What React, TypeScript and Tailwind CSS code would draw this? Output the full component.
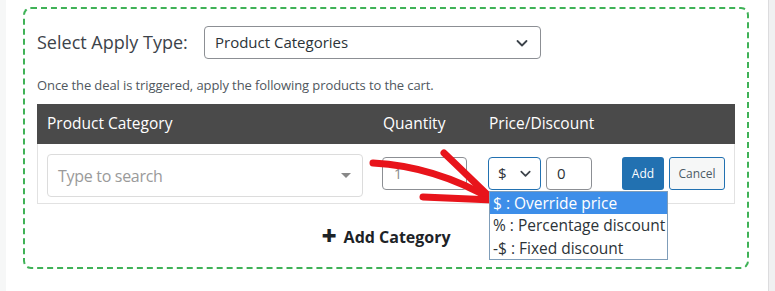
import React, { FC } from "react";

const Chevron: FC<{ className?: string }> = ({ className }) => (
    <svg viewBox="0 0 16 16" className={className} fill="none" stroke="currentColor" strokeWidth={1.8} strokeLinecap="round" strokeLinejoin="round">
        <path d="M3.5 6l4.5 4.5L12.5 6" />
    </svg>
);

const Arrow: FC = () => (
    <svg
        className="absolute left-0 top-0 pointer-events-none"
        width="775"
        height="291"
        viewBox="0 0 775 291"
        fill="none"
        stroke="#e8141b"
        strokeWidth={7}
        strokeLinecap="round"
        strokeLinejoin="round"
    >
        <path d="M373 163 C 412 165, 452 176, 493 200" />
        <path d="M444 153 C 462 170, 478 186, 493 200" />
        <path d="M423 197 C 446 198, 470 199, 493 200" />
    </svg>
);

const App: FC = () => {
    return (
        <div
            className="relative flex w-[775px] h-[291px] overflow-hidden bg-white"
            style={{ fontFamily: '"Open Sans", "Noto Sans", sans-serif' }}
        >
            <div className="w-[6px] bg-[#f6f7f7]" />
            <div className="flex-1 pl-[17px] pr-[19px] pt-[7px]">
                <div className="h-[262px] border-2 border-dashed border-[#3fb257] rounded-[8px] px-[12px] pt-[17px]">
                    <div className="flex items-center h-[33px]">
                        <span className="w-[167px] text-[18px] text-[#3c434a]">Select Apply Type:</span>
                        <div className="flex items-center justify-between w-[337px] h-[33px] border border-[#8c8f94] rounded-[4px] pl-[10px] pr-[10px] text-[15px] text-[#2c3338]">
                            <span>Product Categories</span>
                            <Chevron className="w-[16px] h-[16px] text-[#3c434a]" />
                        </div>
                    </div>
                    <p className="mt-[17px] text-[13px] tracking-[-0.1px] leading-[18px] text-[#50575e]">
                        Once the deal is triggered, apply the following products to the cart.
                    </p>
                    <div className="mt-[10px]">
                        <div className="grid grid-cols-[335px_106px_1fr] items-center h-[40px] px-[10px] bg-[#4a4a4a] text-white text-[15.5px]">
                            <span>Product Category</span>
                            <span className="ml-px">Quantity</span>
                            <span className="ml-px">Price/Discount</span>
                        </div>
                        <div className="relative grid grid-cols-[335px_106px_1fr] items-center h-[60px] px-[9px] border border-t-0 border-[#e2e2e2]">
                            <div className="flex items-center justify-between w-[316px] h-[43px] border border-[#dcdcdc] rounded-[4px] pl-[10px] pr-[11px] mt-[4px]">
                                <span className="text-[16px] tracking-[-0.3px] text-[#9a9a9a]">Type to search</span>
                                <span className="w-0 h-0 border-x-[5px] border-x-transparent border-t-[5px] border-t-[#888]" />
                            </div>
                            <div className="flex items-center w-[85px] h-[33px] border border-[#8c8f94] rounded-[4px] pl-[11px] text-[14px] text-[#8a8a8a]">
                                1
                            </div>
                            <div className="relative flex items-center">
                                <div className="flex items-center justify-between w-[53px] h-[33px] border border-[#2271b1] rounded-[4px] pl-[9px] pr-[7px] text-[15px] text-[#2c3338]">
                                    <span>$</span>
                                    <Chevron className="w-[15px] h-[15px] text-[#3c434a]" />
                                </div>
                                <div className="flex items-center ml-[5px] w-[46px] h-[33px] border border-[#8c8f94] rounded-[4px] pl-[10px] text-[15px] text-[#2c3338]">
                                    0
                                </div>
                                <button className="ml-[30px] w-[42px] h-[33px] rounded-[3px] bg-[#2271b1] text-white text-[12px]">
                                    Add
                                </button>
                                <button className="ml-[5px] w-[56px] h-[33px] rounded-[3px] border border-[#2271b1] bg-[#f6f7f7] text-[#4b5b66] text-[12px]">
                                    Cancel
                                </button>
                                <div className="absolute left-[1px] top-[34px] w-[179px] border border-[#7f9db9] bg-white text-[15.5px] text-[#2c3338] z-10 whitespace-nowrap">
                                    <div className="h-[22px] leading-[22px] pl-[3px] bg-[#3d8ee9] text-white">$ : Override price</div>
                                    <div className="h-[23px] leading-[23px] pl-[3px]">% : Percentage discount</div>
                                    <div className="h-[22px] leading-[22px] pl-[3px]">-$ : Fixed discount</div>
                                </div>
                            </div>
                        </div>
                    </div>
                    <div className="flex items-center justify-center mt-[21px] h-[24px] text-[16px] font-bold text-[#1d2327]">
                        <span className="text-[26px] font-extrabold leading-none mr-[7px] -mt-[4px]">+</span>
                        <span>Add Category</span>
                    </div>
                </div>
            </div>
            <div className="w-[7px] border-l border-[#dcdcde] bg-[#f0f0f1]" />
            <Arrow />
        </div>
    );
};

export default App;
